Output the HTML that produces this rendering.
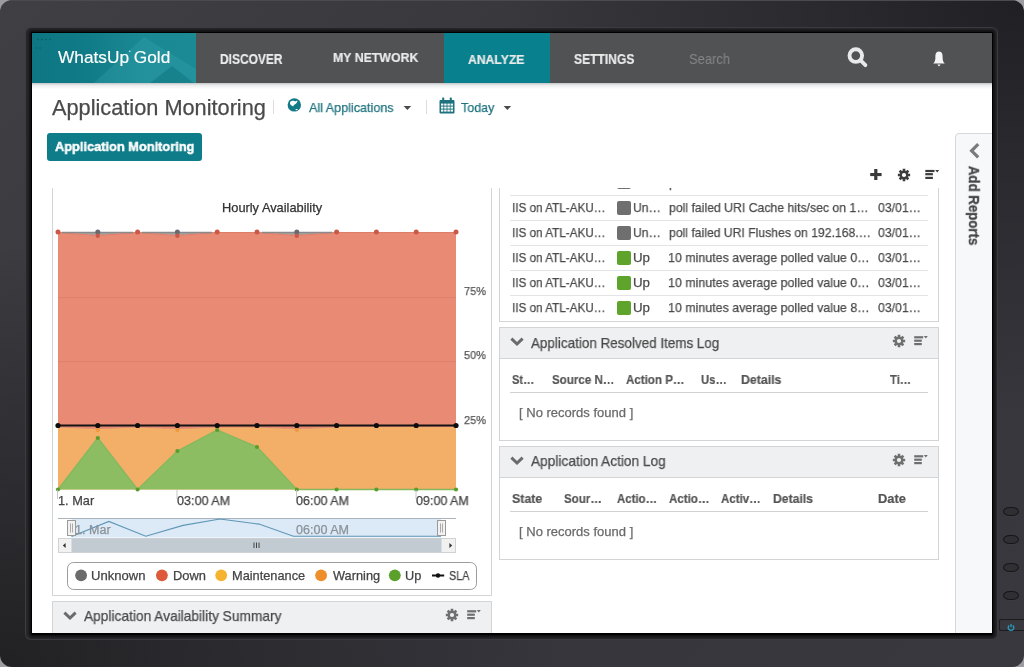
<!DOCTYPE html>
<html><head><meta charset="utf-8"><title>WhatsUp Gold - Application Monitoring</title>
<style>
html,body{margin:0;padding:0;width:1024px;height:667px;overflow:hidden;background:#9d9d9f;font-family:"Liberation Sans",sans-serif;}
.abs{position:absolute;}
.t{position:absolute;white-space:pre;transform-origin:0 0;will-change:transform;font-family:"Liberation Sans",sans-serif;}
#frame{position:absolute;left:0;top:0;width:1024px;height:667px;border-radius:12px;
 background:
  radial-gradient(ellipse 520px 420px at 100% 0, rgba(32,32,36,1), rgba(32,32,36,0.6) 35%, rgba(32,32,36,0) 100%),
  radial-gradient(ellipse 560px 420px at 0 100%, rgba(33,33,36,1), rgba(33,33,36,0.6) 35%, rgba(33,33,36,0) 100%),
  linear-gradient(135deg,#403f43 0%,#38373c 35%,#36353b 65%,#3a383f 100%);}
#frame:before{content:"";position:absolute;left:10px;right:10px;top:0;height:1px;background:#4b4a4e;}
#bezel{position:absolute;left:26px;top:27.5px;width:971px;height:611px;border-radius:5px;background:#28282c;box-shadow:0 0 0 1px #3c3b40;}
#bezel:after{content:"";position:absolute;left:4.5px;top:4.5px;right:4.5px;bottom:4px;background:#000;border-radius:2px;box-shadow:0 0 2.5px 1.5px rgba(8,8,10,0.75);}
#screen{position:absolute;left:32px;top:33px;width:960px;height:600px;overflow:hidden;background:#fff;}
#inner{position:absolute;left:-32px;top:-33px;width:1024px;height:667px;}
.nav{position:absolute;left:32px;top:33px;width:960px;height:50px;background:#515254;}
.logo{position:absolute;left:32px;top:33px;width:164px;height:50px;
 background:linear-gradient(90deg,#0d7682 0%,#107c88 35%,#1a8893 65%,#1b8a95 100%);overflow:hidden;}
.tab{position:absolute;left:444px;top:33px;width:106px;height:50px;background:#08808d;}
.shadow{position:absolute;left:32px;top:83px;width:960px;height:6px;background:linear-gradient(#c4c6c6,#ecedee 40%,rgba(255,255,255,0));}
.sep{position:absolute;width:1px;background:#dcdcdc;}
.btn{position:absolute;left:47px;top:133px;width:155px;height:28px;background:#0f7c89;border-radius:3px;}
.panel{position:absolute;border:1px solid #d3d4d5;background:#fff;box-sizing:border-box;}
.phead{position:absolute;background:#eff0f1;border-bottom:1px solid #d3d4d5;box-sizing:border-box;}
.hline{position:absolute;height:1px;background:#e3e4e5;}
.side{position:absolute;left:955px;top:133px;width:41px;height:510px;background:#f6f8fa;border:1px solid #d6d8da;border-radius:4px 0 0 0;box-sizing:border-box;}
.sq{position:absolute;width:14px;height:14px;border-radius:2px;}
.btnr{position:absolute;width:16px;height:9px;border-radius:7px/4.5px;border:1.6px solid #161619;background:#303034;box-shadow:0 1px 0 #3d3c41;box-sizing:border-box;}
</style></head>
<body>
<div id="frame"></div>
<div id="bezel"></div>
<!-- monitor buttons -->
<div class="btnr" style="left:1003px;top:506.5px"></div>
<div class="btnr" style="left:1003px;top:535px"></div>
<div class="btnr" style="left:1003px;top:563px"></div>
<div class="btnr" style="left:1003px;top:591px"></div>
<div class="abs" style="left:999px;top:619px;width:30px;height:12px;border:1px solid #1c1c1f;border-right:none;border-radius:2px;box-sizing:border-box;box-shadow:inset 1px 1px 0 #38373c"></div>
<svg class="abs" style="left:1005px;top:621px" width="12" height="12" viewBox="0 0 12 12"><path d="M4.2 4.4 A2.8 2.8 0 1 0 7.8 4.4" fill="none" stroke="#2a9cbd" stroke-width="1.3"/><line x1="6" y1="3" x2="6" y2="6.2" stroke="#2a9cbd" stroke-width="1.3"/></svg>

<div id="screen"><div id="inner">
  <!-- NAVBAR -->
  <div class="nav"></div>
  <div class="logo">
    <svg width="164" height="50" viewBox="0 0 164 50" style="position:absolute;left:0;top:0">
      <polygon points="62,50 112,4 164,36 164,50" fill="#46b2bb" opacity="0.22"/>
      <polygon points="118,50 140,33 162,50" fill="#0c6f7b" opacity="0.45"/>
      <g fill="#0b4f58" opacity="0.8"><circle cx="6" cy="6.5" r="0.7"/><circle cx="10" cy="6.5" r="0.7"/><circle cx="14" cy="6.5" r="0.7"/><circle cx="18" cy="6.5" r="0.7"/><circle cx="4" cy="15" r="0.7"/><circle cx="8" cy="15" r="0.7"/></g>
      <circle cx="97.8" cy="18.2" r="0.8" fill="#cfeff2"/>
    </svg>
  </div>
  <div class="tab"></div>
  <div class="shadow"></div>
  <!-- search icon -->
  <svg class="abs" style="left:845px;top:45px" width="24" height="24" viewBox="0 0 24 24">
    <circle cx="10.8" cy="10.6" r="6.3" fill="none" stroke="#e9e9e9" stroke-width="3.9"/>
    <line x1="15.6" y1="15.4" x2="20.4" y2="20.2" stroke="#e9e9e9" stroke-width="3.8" stroke-linecap="round"/>
  </svg>
  <!-- bell -->
  <svg class="abs" style="left:931px;top:49.5px" width="16" height="18" viewBox="0 0 16 18">
    <path d="M8 1.6 C4.6 1.6 4.4 4.8 4.4 7.4 C4.4 10.4 3.6 12 2.2 13.6 L13.8 13.6 C12.4 12 11.6 10.4 11.6 7.4 C11.6 4.8 11.4 1.6 8 1.6 Z" fill="#f4f4f4"/>
    <path d="M6.3 14.6 L9.7 14.6 L8 16.6 Z" fill="#f4f4f4"/>
  </svg>

  <!-- HEADER -->
  <div class="sep" style="left:273px;top:100px;height:14px"></div>
  <div class="sep" style="left:426px;top:100px;height:14px"></div>
  <!-- globe -->
  <svg class="abs" style="left:286px;top:98px" width="16" height="15" viewBox="0 0 16 15">
    <circle cx="8.3" cy="6.9" r="6.7" fill="#137b87"/>
    <path d="M4.1 4.2 C4.8 2.7 6.8 2.3 8.3 3 L9.3 3.5 C10 2.7 11 2.5 11.5 3.3 C11 4.6 10.2 5.6 9 6.2 C8 6.7 7.5 7.3 7.2 8.6 C6.2 8.1 5.4 7.3 4.7 6.7 C4 6 3.8 5 4.1 4.2 Z" fill="#fff"/>
    <ellipse cx="10.6" cy="11.6" rx="1.2" ry="0.7" fill="#fff"/>
  </svg>
  <!-- carets -->
  <svg class="abs" style="left:403px;top:105px" width="9" height="6" viewBox="0 0 9 6"><path d="M0.6 1 L8.2 1 L4.4 5 Z" fill="#4a4a4a"/></svg>
  <svg class="abs" style="left:503px;top:105px" width="9" height="6" viewBox="0 0 9 6"><path d="M0.6 1 L8.2 1 L4.4 5 Z" fill="#4a4a4a"/></svg>
  <!-- calendar -->
  <svg class="abs" style="left:439px;top:97px" width="16" height="17" viewBox="0 0 16 17">
    <rect x="0.5" y="3" width="15" height="13.5" rx="1" fill="#1f737f"/>
    <rect x="3.2" y="0.6" width="2" height="3.6" rx="0.6" fill="#1f737f"/>
    <rect x="10.8" y="0.6" width="2" height="3.6" rx="0.6" fill="#1f737f"/>
    <g fill="#fff">
      <rect x="2" y="6.6" width="2.4" height="2" /><rect x="5.2" y="6.6" width="2.4" height="2"/><rect x="8.4" y="6.6" width="2.4" height="2"/><rect x="11.6" y="6.6" width="2.4" height="2"/>
      <rect x="2" y="9.6" width="2.4" height="2" /><rect x="5.2" y="9.6" width="2.4" height="2"/><rect x="8.4" y="9.6" width="2.4" height="2"/><rect x="11.6" y="9.6" width="2.4" height="2"/>
      <rect x="2" y="12.6" width="2.4" height="2" /><rect x="5.2" y="12.6" width="2.4" height="2"/><rect x="8.4" y="12.6" width="2.4" height="2"/><rect x="11.6" y="12.6" width="2.4" height="2"/>
    </g>
  </svg>
  <div class="btn"></div>

  <!-- toolbar icons -->
  <svg class="abs" style="left:869px;top:168px" width="14" height="13" viewBox="0 0 14 13">
    <rect x="5.2" y="1" width="3.2" height="11" fill="#3a3a3a"/><rect x="1.2" y="5" width="11.4" height="3.1" fill="#3a3a3a"/>
  </svg>
  <svg class="abs" style="left:897px;top:168px" width="14" height="14" viewBox="-7 -7 14 14" id="gear1">
    <use href="#gearshape" fill="#3d3d3d"/>
  </svg>
  <svg class="abs" style="left:924px;top:169px" width="16" height="12" viewBox="0 0 16 12">
    <rect x="1.3" y="0.9" width="9.2" height="2.2" fill="#3a3a3a"/><rect x="1.3" y="4.1" width="7.6" height="2.2" fill="#3a3a3a"/><rect x="1.3" y="7.8" width="7.6" height="2.2" fill="#3a3a3a"/>
    <path d="M11.2 1 L15.2 1 L13.2 3.4 Z" fill="#3a3a3a"/>
  </svg>

  <!-- SIDE PANEL -->
  <div class="side"></div>
  <svg class="abs" style="left:968px;top:142px" width="13" height="18" viewBox="0 0 13 18">
    <path d="M10.2 2.2 L3.6 8.8 L10.2 15.4" fill="none" stroke="#7a7b7c" stroke-width="3.2"/>
  </svg>

  <!-- LEFT PANEL (chart) -->
  <div class="panel" style="left:52px;top:170px;width:440px;height:426px"></div>
  <!-- summary panel -->
  <div class="panel" style="left:52px;top:601px;width:440px;height:60px;"></div>
  <div class="phead" style="left:53px;top:602px;width:438px;height:31px;border-bottom:none"></div>
  <svg class="abs" style="left:62px;top:610px" width="16" height="12" viewBox="0 0 16 12"><path d="M2.4 2.6 L8 8 L13.6 2.6" fill="none" stroke="#6b6b6b" stroke-width="3"/></svg>
  <svg class="abs" style="left:445px;top:608px" width="14" height="14" viewBox="-7 -7 14 14"><use href="#gearshape" fill="#6f6f6f"/></svg>
  <svg class="abs" style="left:466px;top:609px" width="16" height="12" viewBox="0 0 16 12">
    <rect x="1.2" y="1.2" width="9" height="2.2" fill="#6f6f6f"/><rect x="1.2" y="4.6" width="7.6" height="2.2" fill="#6f6f6f"/><rect x="1.2" y="8" width="7.6" height="2.2" fill="#6f6f6f"/>
    <path d="M10.8 1 L14.8 1 L12.8 3.4 Z" fill="#6f6f6f"/>
  </svg>

  <!-- CHART -->
  <svg class="abs" style="left:52px;top:188px" width="440" height="410" viewBox="52 188 440 410">
    <defs>
      <g id="gearshape"><path d="M4.30 -1.32 L6.16 -1.31 L6.16 1.31 L4.30 1.32 L3.97 2.11 L5.28 3.43 L3.43 5.28 L2.11 3.97 L1.32 4.30 L1.31 6.16 L-1.31 6.16 L-1.32 4.30 L-2.11 3.97 L-3.43 5.28 L-5.28 3.43 L-3.97 2.11 L-4.30 1.32 L-6.16 1.31 L-6.16 -1.31 L-4.30 -1.32 L-3.97 -2.11 L-5.28 -3.43 L-3.43 -5.28 L-2.11 -3.97 L-1.32 -4.30 L-1.31 -6.16 L1.31 -6.16 L1.32 -4.30 L2.11 -3.97 L3.43 -5.28 L5.28 -3.43 L3.97 -2.11 Z M0 -2.1 A2.1 2.1 0 1 0 0 2.1 A2.1 2.1 0 1 0 0 -2.1 Z" fill-rule="evenodd" stroke-linejoin="round"/></g>
    </defs>
    <!-- areas -->
    <path id="aUnknown" fill="#a3a3a3" d="M58 232 L97.8 232 L137.6 232 L177.4 232 L217.2 232 L257 232 L296.8 232 L336.6 232 L376.4 232 L416.2 232 L456 232 L456 232 L416.2 232 L376.4 232 L336.6 232 L296.8 235.5 L257 232 L217.2 232 L177.4 235.5 L137.6 232 L97.8 235.5 L58 232 Z"/>
    <path id="aDown" fill="#e98a74" d="M58 232 L97.8 235.5 L137.6 232 L177.4 235.5 L217.2 232 L257 232 L296.8 235.5 L336.6 232 L376.4 232 L416.2 232 L456 232 L456 427 L416.2 427 L376.4 427 L336.6 427 L296.8 428.6 L257 427 L217.2 427 L177.4 428.6 L137.6 427 L97.8 428.6 L58 427 Z"/>
    <path id="aWarn" fill="#f3ae68" d="M58 427 L97.8 428.6 L137.6 427 L177.4 428.6 L217.2 427 L257 427 L296.8 428.6 L336.6 427 L376.4 427 L416.2 427 L456 427 L456 489.5 L58 489.5 Z"/>
    <path id="aUp" fill="#8dbd62" d="M58 489.5 L97.8 438 L137.6 489.5 L177.4 451 L217.2 430 L257 447 L296.8 489.5 L336.6 489.5 L376.4 489.5 L416.2 489.5 L456 489.5 Z"/>
    <!-- grid lines -->
    <line x1="58" y1="297.5" x2="456" y2="297.5" stroke="#000" stroke-opacity="0.06"/>
    <line x1="58" y1="361.5" x2="456" y2="361.5" stroke="#000" stroke-opacity="0.06"/>
    <!-- series lines -->
    <path fill="none" stroke="#dc7e6a" stroke-width="1" d="M58 232.5 L97.8 235.5 L137.6 232.5 L177.4 235.5 L217.2 232.5 L257 232.5 L296.8 235.5 L336.6 232.5 L376.4 232.5 L416.2 232.5 L456 232.5"/>
    <path fill="none" stroke="#8a8a8a" stroke-width="1.5" d="M62 232.6 L133 232.6 M142 232.6 L212 232.6 M262 232.6 L332 232.6"/>
    <path fill="none" stroke="#d9826e" stroke-width="0.8" d="M58 427 L97.8 428.6 L137.6 427 L177.4 428.6 L217.2 427 L257 427 L296.8 428.6 L336.6 427"/>
    <path fill="none" stroke="#86b95e" stroke-width="1.5" d="M58 489.5 L97.8 438 L137.6 489.5 L177.4 451 L217.2 430 L257 447 L296.8 489.5 L456 489.5"/>
    <!-- dots -->
    <g fill="#676a70"><circle cx="97.8" cy="232" r="2.5"/><circle cx="177.4" cy="232" r="2.5"/><circle cx="296.8" cy="232" r="2.5"/></g>
    <g fill="#c95a47"><circle cx="58" cy="232" r="2.5"/><circle cx="97.8" cy="235.8" r="2.2"/><circle cx="137.6" cy="232" r="2.5"/><circle cx="177.4" cy="235.8" r="2.2"/><circle cx="217.2" cy="232" r="2.5"/><circle cx="257" cy="232" r="2.5"/><circle cx="296.8" cy="235.8" r="2.2"/><circle cx="336.6" cy="232" r="2.5"/><circle cx="376.4" cy="232" r="2.5"/><circle cx="416.2" cy="232" r="2.5"/><circle cx="456" cy="232" r="2.5"/></g>
    <g fill="#ee9a3c"><circle cx="97.8" cy="430" r="2.1"/><circle cx="177.4" cy="430" r="2.1"/><circle cx="296.8" cy="430" r="2.1"/></g>
    <g fill="#5b9c2e"><circle cx="58" cy="489.5" r="2.1"/><circle cx="97.8" cy="438" r="2.1"/><circle cx="137.6" cy="489.5" r="2.1"/><circle cx="177.4" cy="451" r="2.1"/><circle cx="217.2" cy="430" r="2.1"/><circle cx="257" cy="447" r="2.1"/><circle cx="296.8" cy="489.5" r="2.1"/><circle cx="336.6" cy="489.5" r="2.1"/><circle cx="376.4" cy="489.5" r="2.1"/><circle cx="416.2" cy="489.5" r="2.1"/><circle cx="456" cy="489.5" r="2.1"/></g>
    <!-- SLA -->
    <line x1="58" y1="425.5" x2="456" y2="425.5" stroke="#141414" stroke-width="2.2"/>
    <g fill="#0d0d0d"><circle cx="58" cy="425.5" r="2.6"/><circle cx="97.8" cy="425.5" r="2.6"/><circle cx="137.6" cy="425.5" r="2.6"/><circle cx="177.4" cy="425.5" r="2.6"/><circle cx="217.2" cy="425.5" r="2.6"/><circle cx="257" cy="425.5" r="2.6"/><circle cx="296.8" cy="425.5" r="2.6"/><circle cx="336.6" cy="425.5" r="2.6"/><circle cx="376.4" cy="425.5" r="2.6"/><circle cx="416.2" cy="425.5" r="2.6"/><circle cx="456" cy="425.5" r="2.6"/></g>
    <!-- ticks -->
    <g stroke="#c8c8c8" stroke-width="1"><line x1="57.5" y1="490" x2="57.5" y2="499"/><line x1="177" y1="490" x2="177" y2="499"/><line x1="296.5" y1="490" x2="296.5" y2="499"/><line x1="416" y1="490" x2="416" y2="499"/></g>
    <!-- navigator -->
    <rect x="71.5" y="518.5" width="369.5" height="19" fill="#dce9f6"/>
    <line x1="58" y1="518.5" x2="456" y2="518.5" stroke="#aab2ba" stroke-width="1"/>
    <path fill="none" stroke="#5f97b6" stroke-width="1.1" d="M71.5 536.6 L108.9 521.4 L145.8 536.2 L183 525.4 L220 519 L259 524.1 L293.4 536.2 L441 536.2"/>
    <!-- scrollbar -->
    <rect x="58.5" y="538.5" width="397" height="14" fill="#f1f1f1" stroke="#cfd3d6"/>
    <rect x="71.5" y="538.5" width="370" height="13.5" fill="#c3cbd2"/>
    <path d="M65.6 543 L62.8 545.5 L65.6 548 Z" fill="#333"/>
    <path d="M449.4 543 L452.2 545.5 L449.4 548 Z" fill="#333"/>
    <g stroke="#444" stroke-width="1"><line x1="254" y1="542.5" x2="254" y2="548"/><line x1="256.5" y1="542.5" x2="256.5" y2="548"/><line x1="259" y1="542.5" x2="259" y2="548"/></g>
    <!-- handles -->
    <rect x="67.5" y="520.5" width="8" height="15" fill="#f2f2f2" stroke="#9a9a9a"/>
    <line x1="70.5" y1="523.5" x2="70.5" y2="532.5" stroke="#aaa"/><line x1="72.5" y1="523.5" x2="72.5" y2="532.5" stroke="#aaa"/>
    <rect x="437.5" y="520.5" width="8" height="15" fill="#f2f2f2" stroke="#9a9a9a"/>
    <line x1="440.5" y1="523.5" x2="440.5" y2="532.5" stroke="#aaa"/><line x1="442.5" y1="523.5" x2="442.5" y2="532.5" stroke="#aaa"/>
    <!-- legend -->
    <rect x="67.5" y="562.5" width="409" height="27" rx="6" fill="#fff" stroke="#9c9c9c"/>
    <circle cx="81.1" cy="575.3" r="5.9" fill="#6b6b6b"/>
    <circle cx="161.9" cy="575.3" r="5.9" fill="#dc5a3b"/>
    <circle cx="221.2" cy="575.3" r="5.9" fill="#f6b330"/>
    <circle cx="321.1" cy="575.3" r="5.9" fill="#ee8f2c"/>
    <circle cx="394.8" cy="575.3" r="5.9" fill="#5ba02b"/>
    <line x1="432" y1="575.5" x2="444.2" y2="575.5" stroke="#111" stroke-width="2"/>
    <circle cx="438" cy="575.5" r="2.2" fill="#111"/>
  </svg>

  <!-- RIGHT PANELS -->
  <div class="panel" style="left:499px;top:170px;width:440px;height:152px"></div>
  <div class="hline" style="left:510px;top:195px;width:418px"></div>
  <div class="hline" style="left:510px;top:220px;width:418px"></div>
  <div class="hline" style="left:510px;top:245px;width:418px"></div>
  <div class="hline" style="left:510px;top:270px;width:418px"></div>
  <div class="hline" style="left:510px;top:295px;width:418px"></div>
  <div class="sq" style="left:617px;top:175px;background:#6f6f6f"></div>
  <div class="sq" style="left:617px;top:201px;background:#6f6f6f"></div>
  <div class="sq" style="left:617px;top:226px;background:#6f6f6f"></div>
  <div class="sq" style="left:617px;top:251px;background:#5ea42a"></div>
  <div class="sq" style="left:617px;top:276px;background:#5ea42a"></div>
  <div class="sq" style="left:617px;top:301px;background:#5ea42a"></div>

  <div class="panel" style="left:499px;top:327px;width:440px;height:114px"></div>
  <div class="phead" style="left:500px;top:328px;width:438px;height:31px"></div>
  <svg class="abs" style="left:509px;top:336px" width="16" height="12" viewBox="0 0 16 12"><path d="M2.4 2.6 L8 8 L13.6 2.6" fill="none" stroke="#6b6b6b" stroke-width="3"/></svg>
  <svg class="abs" style="left:892px;top:334px" width="14" height="14" viewBox="-7 -7 14 14"><use href="#gearshape" fill="#6f6f6f"/></svg>
  <svg class="abs" style="left:913px;top:335px" width="16" height="12" viewBox="0 0 16 12">
    <rect x="1.2" y="1.2" width="9" height="2.2" fill="#6f6f6f"/><rect x="1.2" y="4.6" width="7.6" height="2.2" fill="#6f6f6f"/><rect x="1.2" y="8" width="7.6" height="2.2" fill="#6f6f6f"/>
    <path d="M10.8 1 L14.8 1 L12.8 3.4 Z" fill="#6f6f6f"/>
  </svg>
  <div class="hline" style="left:510px;top:392px;width:418px;background:#d0d1d2"></div>

  <div class="panel" style="left:499px;top:446px;width:440px;height:114px"></div>
  <div class="phead" style="left:500px;top:447px;width:438px;height:31px"></div>
  <svg class="abs" style="left:509px;top:455px" width="16" height="12" viewBox="0 0 16 12"><path d="M2.4 2.6 L8 8 L13.6 2.6" fill="none" stroke="#6b6b6b" stroke-width="3"/></svg>
  <svg class="abs" style="left:892px;top:453px" width="14" height="14" viewBox="-7 -7 14 14"><use href="#gearshape" fill="#6f6f6f"/></svg>
  <svg class="abs" style="left:913px;top:454px" width="16" height="12" viewBox="0 0 16 12">
    <rect x="1.2" y="1.2" width="9" height="2.2" fill="#6f6f6f"/><rect x="1.2" y="4.6" width="7.6" height="2.2" fill="#6f6f6f"/><rect x="1.2" y="8" width="7.6" height="2.2" fill="#6f6f6f"/>
    <path d="M10.8 1 L14.8 1 L12.8 3.4 Z" fill="#6f6f6f"/>
  </svg>
  <div class="hline" style="left:510px;top:511px;width:418px;background:#d0d1d2"></div>

<span class="t" style="left:57.80px;top:49.00px;font-size:17px;line-height:17px;color:#ffffff;font-weight:normal;transform:scaleX(1.0157);-webkit-text-stroke:0.15px #fff;">WhatsUp Gold</span>
<span class="t" style="left:220.26px;top:53.00px;font-size:13.9px;line-height:13.9px;color:#ebebeb;font-weight:bold;transform:scaleX(0.8611);-webkit-text-stroke:0.2px currentColor;">DISCOVER</span>
<span class="t" style="left:332.74px;top:51.00px;font-size:13.6px;line-height:13.6px;color:#ebebeb;font-weight:bold;transform:scaleX(0.9073);-webkit-text-stroke:0.2px currentColor;">MY NETWORK</span>
<span class="t" style="left:468.43px;top:53.00px;font-size:13.4px;line-height:13.4px;color:#ebebeb;font-weight:bold;transform:scaleX(0.9099);-webkit-text-stroke:0.2px currentColor;">ANALYZE</span>
<span class="t" style="left:574.14px;top:53.00px;font-size:13.9px;line-height:13.9px;color:#ebebeb;font-weight:bold;transform:scaleX(0.8683);-webkit-text-stroke:0.2px currentColor;">SETTINGS</span>
<span class="t" style="left:688.95px;top:53.00px;font-size:13.9px;line-height:13.9px;color:#858686;font-weight:normal;transform:scaleX(0.9341); ">Search</span>
<span class="t" style="left:52.00px;top:97.00px;font-size:21.2px;line-height:21.2px;color:#4a4a4a;font-weight:normal;transform:scaleX(1.0260);-webkit-text-stroke:0.25px currentColor;">Application Monitoring</span>
<span class="t" style="left:308.80px;top:101.00px;font-size:13.4px;line-height:13.4px;color:#1f737f;font-weight:normal;transform:scaleX(0.9392);-webkit-text-stroke:0.25px currentColor;">All Applications</span>
<span class="t" style="left:461.45px;top:101.00px;font-size:13.4px;line-height:13.4px;color:#1f737f;font-weight:normal;transform:scaleX(0.9328);-webkit-text-stroke:0.25px currentColor;">Today</span>
<span class="t" style="left:54.82px;top:140.00px;font-size:13.4px;line-height:13.4px;color:#ffffff;font-weight:bold;transform:scaleX(0.9565);-webkit-text-stroke:0.45px #fff;">Application Monitoring</span>
<span class="t" style="left:221.57px;top:202.00px;font-size:12.6px;line-height:12.6px;color:#333333;font-weight:normal;transform:scaleX(1.0175);-webkit-text-stroke:0.25px currentColor;">Hourly Availability</span>
<span class="t" style="left:464.05px;top:285.00px;font-size:11.6px;line-height:11.6px;color:#555555;font-weight:normal;transform:scaleX(0.9429);-webkit-text-stroke:0.25px currentColor;">75%</span>
<span class="t" style="left:464.16px;top:349.00px;font-size:11.6px;line-height:11.6px;color:#555555;font-weight:normal;transform:scaleX(0.9380);-webkit-text-stroke:0.25px currentColor;">50%</span>
<span class="t" style="left:464.05px;top:414.00px;font-size:11.6px;line-height:11.6px;color:#555555;font-weight:normal;transform:scaleX(0.9429);-webkit-text-stroke:0.25px currentColor;">25%</span>
<span class="t" style="left:57.58px;top:495.00px;font-size:12.7px;line-height:12.7px;color:#444444;font-weight:normal;transform:scaleX(1.0058);-webkit-text-stroke:0.25px currentColor;">1. Mar</span>
<span class="t" style="left:177.30px;top:495.00px;font-size:12.7px;line-height:12.7px;color:#444444;font-weight:normal;transform:scaleX(0.9910);-webkit-text-stroke:0.25px currentColor;">03:00 AM</span>
<span class="t" style="left:296.40px;top:495.00px;font-size:12.7px;line-height:12.7px;color:#444444;font-weight:normal;transform:scaleX(0.9891);-webkit-text-stroke:0.25px currentColor;">06:00 AM</span>
<span class="t" style="left:416.40px;top:495.00px;font-size:12.7px;line-height:12.7px;color:#444444;font-weight:normal;transform:scaleX(0.9852);-webkit-text-stroke:0.25px currentColor;">09:00 AM</span>
<span class="t" style="left:74.90px;top:524.00px;font-size:12.3px;line-height:12.3px;color:#8a9299;font-weight:normal;transform:scaleX(1.0207);-webkit-text-stroke:0.25px currentColor;">1. Mar</span>
<span class="t" style="left:296.40px;top:524.00px;font-size:12.3px;line-height:12.3px;color:#8a9299;font-weight:normal;transform:scaleX(1.0212);-webkit-text-stroke:0.25px currentColor;">06:00 AM</span>
<span class="t" style="left:91.26px;top:570.00px;font-size:12.7px;line-height:12.7px;color:#444444;font-weight:normal;transform:scaleX(1.0283);-webkit-text-stroke:0.25px currentColor;">Unknown</span>
<span class="t" style="left:172.67px;top:570.00px;font-size:12.7px;line-height:12.7px;color:#444444;font-weight:normal;transform:scaleX(1.0161);-webkit-text-stroke:0.25px currentColor;">Down</span>
<span class="t" style="left:232.38px;top:570.00px;font-size:12.7px;line-height:12.7px;color:#444444;font-weight:normal;transform:scaleX(1.0067);-webkit-text-stroke:0.25px currentColor;">Maintenance</span>
<span class="t" style="left:332.50px;top:570.00px;font-size:12.7px;line-height:12.7px;color:#444444;font-weight:normal;transform:scaleX(1.0071);-webkit-text-stroke:0.25px currentColor;">Warning</span>
<span class="t" style="left:405.48px;top:570.00px;font-size:12.7px;line-height:12.7px;color:#444444;font-weight:normal;transform:scaleX(1.0046);-webkit-text-stroke:0.25px currentColor;">Up</span>
<span class="t" style="left:449.06px;top:570.00px;font-size:12.7px;line-height:12.7px;color:#444444;font-weight:normal;transform:scaleX(0.8516);-webkit-text-stroke:0.25px currentColor;">SLA</span>
<span class="t" style="left:84.10px;top:609.00px;font-size:14.4px;line-height:14.4px;color:#4a4a4a;font-weight:normal;transform:scaleX(0.9540);-webkit-text-stroke:0.25px currentColor;">Application Availability Summary</span>
<span class="t" style="left:511.55px;top:176.00px;font-size:13.3px;line-height:13.3px;color:#4a4a4a;font-weight:normal;transform:scaleX(0.8807);-webkit-text-stroke:0.25px currentColor;">IIS on ATL-AKU…</span>
<span class="t" style="left:633.23px;top:176.00px;font-size:13.3px;line-height:13.3px;color:#4a4a4a;font-weight:normal;transform:scaleX(0.9161);-webkit-text-stroke:0.25px currentColor;">Un…</span>
<span class="t" style="left:668.66px;top:176.00px;font-size:13.3px;line-height:13.3px;color:#4a4a4a;font-weight:normal;transform:scaleX(0.9215);-webkit-text-stroke:0.25px currentColor;">poll failed URI Cache hits/sec on 1…</span>
<span class="t" style="left:877.51px;top:176.00px;font-size:13.3px;line-height:13.3px;color:#4a4a4a;font-weight:normal;transform:scaleX(0.9212);-webkit-text-stroke:0.25px currentColor;">03/01…</span>
<span class="t" style="left:511.55px;top:201.00px;font-size:13.3px;line-height:13.3px;color:#4a4a4a;font-weight:normal;transform:scaleX(0.8807);-webkit-text-stroke:0.25px currentColor;">IIS on ATL-AKU…</span>
<span class="t" style="left:633.23px;top:201.00px;font-size:13.3px;line-height:13.3px;color:#4a4a4a;font-weight:normal;transform:scaleX(0.9161);-webkit-text-stroke:0.25px currentColor;">Un…</span>
<span class="t" style="left:668.66px;top:201.00px;font-size:13.3px;line-height:13.3px;color:#4a4a4a;font-weight:normal;transform:scaleX(0.9215);-webkit-text-stroke:0.25px currentColor;">poll failed URI Cache hits/sec on 1…</span>
<span class="t" style="left:877.51px;top:201.00px;font-size:13.3px;line-height:13.3px;color:#4a4a4a;font-weight:normal;transform:scaleX(0.9212);-webkit-text-stroke:0.25px currentColor;">03/01…</span>
<span class="t" style="left:511.55px;top:226.00px;font-size:13.3px;line-height:13.3px;color:#4a4a4a;font-weight:normal;transform:scaleX(0.8807);-webkit-text-stroke:0.25px currentColor;">IIS on ATL-AKU…</span>
<span class="t" style="left:633.23px;top:226.00px;font-size:13.3px;line-height:13.3px;color:#4a4a4a;font-weight:normal;transform:scaleX(0.9161);-webkit-text-stroke:0.25px currentColor;">Un…</span>
<span class="t" style="left:668.67px;top:226.00px;font-size:13.3px;line-height:13.3px;color:#4a4a4a;font-weight:normal;transform:scaleX(0.9163);-webkit-text-stroke:0.25px currentColor;">poll failed URI Flushes on 192.168.…</span>
<span class="t" style="left:877.51px;top:226.00px;font-size:13.3px;line-height:13.3px;color:#4a4a4a;font-weight:normal;transform:scaleX(0.9212);-webkit-text-stroke:0.25px currentColor;">03/01…</span>
<span class="t" style="left:511.55px;top:251.00px;font-size:13.3px;line-height:13.3px;color:#4a4a4a;font-weight:normal;transform:scaleX(0.8807);-webkit-text-stroke:0.25px currentColor;">IIS on ATL-AKU…</span>
<span class="t" style="left:633.14px;top:251.00px;font-size:13.3px;line-height:13.3px;color:#4a4a4a;font-weight:normal;transform:scaleX(0.9917);-webkit-text-stroke:0.25px currentColor;">Up</span>
<span class="t" style="left:668.41px;top:251.00px;font-size:13.3px;line-height:13.3px;color:#4a4a4a;font-weight:normal;transform:scaleX(0.9340);-webkit-text-stroke:0.25px currentColor;">10 minutes average polled value 0…</span>
<span class="t" style="left:877.51px;top:251.00px;font-size:13.3px;line-height:13.3px;color:#4a4a4a;font-weight:normal;transform:scaleX(0.9212);-webkit-text-stroke:0.25px currentColor;">03/01…</span>
<span class="t" style="left:511.55px;top:276.00px;font-size:13.3px;line-height:13.3px;color:#4a4a4a;font-weight:normal;transform:scaleX(0.8807);-webkit-text-stroke:0.25px currentColor;">IIS on ATL-AKU…</span>
<span class="t" style="left:633.14px;top:276.00px;font-size:13.3px;line-height:13.3px;color:#4a4a4a;font-weight:normal;transform:scaleX(0.9917);-webkit-text-stroke:0.25px currentColor;">Up</span>
<span class="t" style="left:668.41px;top:276.00px;font-size:13.3px;line-height:13.3px;color:#4a4a4a;font-weight:normal;transform:scaleX(0.9340);-webkit-text-stroke:0.25px currentColor;">10 minutes average polled value 0…</span>
<span class="t" style="left:877.51px;top:276.00px;font-size:13.3px;line-height:13.3px;color:#4a4a4a;font-weight:normal;transform:scaleX(0.9212);-webkit-text-stroke:0.25px currentColor;">03/01…</span>
<span class="t" style="left:511.55px;top:301.00px;font-size:13.3px;line-height:13.3px;color:#4a4a4a;font-weight:normal;transform:scaleX(0.8807);-webkit-text-stroke:0.25px currentColor;">IIS on ATL-AKU…</span>
<span class="t" style="left:633.14px;top:301.00px;font-size:13.3px;line-height:13.3px;color:#4a4a4a;font-weight:normal;transform:scaleX(0.9917);-webkit-text-stroke:0.25px currentColor;">Up</span>
<span class="t" style="left:668.41px;top:301.00px;font-size:13.3px;line-height:13.3px;color:#4a4a4a;font-weight:normal;transform:scaleX(0.9340);-webkit-text-stroke:0.25px currentColor;">10 minutes average polled value 8…</span>
<span class="t" style="left:877.51px;top:301.00px;font-size:13.3px;line-height:13.3px;color:#4a4a4a;font-weight:normal;transform:scaleX(0.9212);-webkit-text-stroke:0.25px currentColor;">03/01…</span>
<span class="t" style="left:531.30px;top:336.00px;font-size:14.4px;line-height:14.4px;color:#4a4a4a;font-weight:normal;transform:scaleX(0.9341);-webkit-text-stroke:0.25px currentColor;">Application Resolved Items Log</span>
<span class="t" style="left:511.57px;top:374.00px;font-size:12.9px;line-height:12.9px;color:#555555;font-weight:bold;transform:scaleX(0.8585);-webkit-text-stroke:0.2px currentColor;">St…</span>
<span class="t" style="left:552.05px;top:374.00px;font-size:12.9px;line-height:12.9px;color:#555555;font-weight:bold;transform:scaleX(0.8992);-webkit-text-stroke:0.2px currentColor;">Source N…</span>
<span class="t" style="left:625.85px;top:374.00px;font-size:12.9px;line-height:12.9px;color:#555555;font-weight:bold;transform:scaleX(0.8968);-webkit-text-stroke:0.2px currentColor;">Action P…</span>
<span class="t" style="left:700.52px;top:374.00px;font-size:12.9px;line-height:12.9px;color:#555555;font-weight:bold;transform:scaleX(0.8781);-webkit-text-stroke:0.2px currentColor;">Us…</span>
<span class="t" style="left:740.64px;top:374.00px;font-size:12.9px;line-height:12.9px;color:#555555;font-weight:bold;transform:scaleX(0.9562);-webkit-text-stroke:0.2px currentColor;">Details</span>
<span class="t" style="left:890.19px;top:374.00px;font-size:12.9px;line-height:12.9px;color:#555555;font-weight:bold;transform:scaleX(0.8726);-webkit-text-stroke:0.2px currentColor;">Ti…</span>
<span class="t" style="left:519.39px;top:407.00px;font-size:12.9px;line-height:12.9px;color:#6a6a6a;font-weight:normal;transform:scaleX(1.0094);-webkit-text-stroke:0.25px currentColor;">[ No records found ]</span>
<span class="t" style="left:531.30px;top:454.00px;font-size:14.4px;line-height:14.4px;color:#4a4a4a;font-weight:normal;transform:scaleX(0.9522);-webkit-text-stroke:0.25px currentColor;">Application Action Log</span>
<span class="t" style="left:511.53px;top:493.00px;font-size:12.9px;line-height:12.9px;color:#555555;font-weight:bold;transform:scaleX(0.9608);-webkit-text-stroke:0.2px currentColor;">State</span>
<span class="t" style="left:563.75px;top:493.00px;font-size:12.9px;line-height:12.9px;color:#555555;font-weight:bold;transform:scaleX(0.8986);-webkit-text-stroke:0.2px currentColor;">Sour…</span>
<span class="t" style="left:616.96px;top:493.00px;font-size:12.9px;line-height:12.9px;color:#555555;font-weight:bold;transform:scaleX(0.8882);-webkit-text-stroke:0.2px currentColor;">Actio…</span>
<span class="t" style="left:668.55px;top:493.00px;font-size:12.9px;line-height:12.9px;color:#555555;font-weight:bold;transform:scaleX(0.8975);-webkit-text-stroke:0.2px currentColor;">Actio…</span>
<span class="t" style="left:720.55px;top:493.00px;font-size:12.9px;line-height:12.9px;color:#555555;font-weight:bold;transform:scaleX(0.8950);-webkit-text-stroke:0.2px currentColor;">Activ…</span>
<span class="t" style="left:772.75px;top:493.00px;font-size:12.9px;line-height:12.9px;color:#555555;font-weight:bold;transform:scaleX(0.9464);-webkit-text-stroke:0.2px currentColor;">Details</span>
<span class="t" style="left:877.70px;top:493.00px;font-size:12.9px;line-height:12.9px;color:#555555;font-weight:bold;transform:scaleX(0.9999);-webkit-text-stroke:0.2px currentColor;">Date</span>
<span class="t" style="left:519.39px;top:526.00px;font-size:12.9px;line-height:12.9px;color:#6a6a6a;font-weight:normal;transform:scaleX(1.0094);-webkit-text-stroke:0.25px currentColor;">[ No records found ]</span>
<span class="t" style="left:968.80px;top:153.70px;font-size:14.0px;line-height:14.0px;color:#444444;font-weight:bold;transform-origin:0 11.90px;transform:rotate(90deg) scaleX(0.9456);-webkit-text-stroke:0.3px currentColor">Add Reports</span>
  <!-- scroll clip mask: white strip above y=188 in content columns -->
  <div class="abs" style="left:40px;top:161px;width:470px;height:27px;background:#fff"></div>
  <div class="abs" style="left:495px;top:161px;width:455px;height:27px;background:#fff"></div>
  <!-- re-draw toolbar icons above mask -->
  <svg class="abs" style="left:869px;top:168px" width="14" height="13" viewBox="0 0 14 13">
    <rect x="5.2" y="1" width="3.2" height="11" fill="#3a3a3a"/><rect x="1.2" y="5" width="11.4" height="3.1" fill="#3a3a3a"/>
  </svg>
  <svg class="abs" style="left:897px;top:168px" width="14" height="14" viewBox="-7 -7 14 14">
    <use href="#gearshape" fill="#3d3d3d"/>
  </svg>
  <svg class="abs" style="left:924px;top:169px" width="16" height="12" viewBox="0 0 16 12">
    <rect x="1.3" y="0.9" width="9.2" height="2.2" fill="#3a3a3a"/><rect x="1.3" y="4.1" width="7.6" height="2.2" fill="#3a3a3a"/><rect x="1.3" y="7.8" width="7.6" height="2.2" fill="#3a3a3a"/>
    <path d="M11.2 1 L15.2 1 L13.2 3.4 Z" fill="#3a3a3a"/>
  </svg>


</div></div>
</body></html>
